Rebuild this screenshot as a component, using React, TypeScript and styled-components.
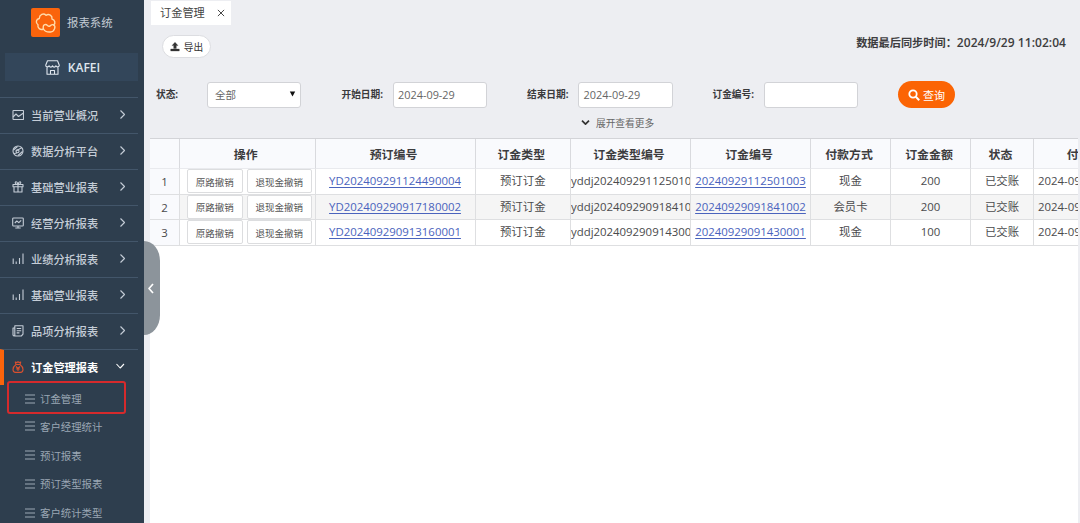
import React from 'react';
import styled, { createGlobalStyle, css } from 'styled-components';

const GlobalStyle = createGlobalStyle`
  * { box-sizing: border-box; }
  html, body { margin: 0; padding: 0; overflow: hidden; }
  body { font-family: "Open Sans", "Noto Sans CJK SC", sans-serif; color: #444; background: #edeef2; }
`;

const Page = styled.div`
  display: flex;
  position: relative;
  width: 1080px;
  height: 523px;
  overflow: hidden;
  background: #edeef2;
`;

const Sidebar = styled.aside`
  width: 144px;
  flex: none;
  height: 523px;
  overflow: hidden;
  background: #2e3e4e;
  display: flex;
  flex-direction: column;
`;

const Brand = styled.div`
  display: flex;
  align-items: center;
  height: 30px;
  margin: 8px 0 0 31px;
  gap: 7px;
  font-size: 11.4px;
  line-height: 16px;
  color: #c3cbd4;
  white-space: nowrap;
`;

const Logo = styled.svg`
  width: 29px;
  height: 29px;
  border-radius: 2px;
  background: #fa640c;
  fill: none;
  stroke: #ffd9a8;
  stroke-width: 1.4;
  stroke-linecap: round;
  stroke-linejoin: round;
`;

const Shop = styled.div`
  display: flex;
  flex: none;
  align-items: center;
  justify-content: center;
  gap: 8px;
  width: 133px;
  height: 28px;
  margin: 16px 0 15px 5px;
  padding-left: 2px;
  background: #33465a;
  color: #dfe6ee;
  font-size: 12px;
  font-weight: 600;
`;

const Icon = styled.svg<{ $size?: number }>`
  width: ${p => p.$size ?? 12}px;
  height: ${p => p.$size ?? 12}px;
  flex: none;
  fill: none;
  stroke: currentColor;
  stroke-width: 1.1;
  stroke-linejoin: round;
`;

const MenuRow = styled.div<{ $active?: boolean }>`
  display: flex;
  align-items: center;
  width: 138px;
  height: 36px;
  flex: none;
  padding: 0 ${p => (p.$active ? 13 : 11)}px 0 ${p => (p.$active ? 8 : 12)}px;
  border-top: 1px solid #43566a;
  color: #c5cdd7;
  & > svg { margin-bottom: 2px; }
  ${p => p.$active && css`
    border-left: 4px solid #fa640c;
    color: #fff;
    & > svg:first-child { color: #d9502f; }
  `}
`;

const Menu = styled.nav`
  padding-top: 1px;
`;

const MenuLabel = styled.span<{ $active?: boolean }>`
  margin-left: 7px;
  flex: 1;
  white-space: nowrap;
  font-size: 11.2px;
  line-height: 16px;
  font-weight: ${p => (p.$active ? 600 : 500)};
`;

const SubList = styled.div`
  padding-left: 7px;
`;

const SubItem = styled.div<{ $marked?: boolean }>`
  display: flex;
  align-items: center;
  gap: 5px;
  width: 119px;
  height: 28.8px;
  padding-left: 18px;
  color: #9ba7b4;
  font-size: 10.4px;
  white-space: nowrap;
  ${p => p.$marked && css`
    height: 33px;
    padding-left: 16px;
    margin-top: -4px;
    margin-bottom: -2px;
    padding-top: 2px;
    border: 2px solid #d62a2c;
    border-radius: 3px;
  `}
`;

const Main = styled.main`
  flex: 1;
  min-width: 0;
  display: flex;
  flex-direction: column;
  padding: 0 2px 0 6px;
`;

const Tab = styled.div`
  display: flex;
  align-items: center;
  justify-content: space-between;
  width: 80px;
  height: 24px;
  margin: 1px 0 0 1px;
  padding: 0 6px 0 9px;
  background: #fff;
  font-size: 11.2px;
  line-height: 16px;
`;

const TopBar = styled.div`
  display: flex;
  justify-content: space-between;
  height: 56px;
  padding: 10px 12px 0 12px;
`;

const Export = styled.button`
  display: flex;
  align-items: center;
  justify-content: center;
  gap: 4px;
  width: 49px;
  height: 23px;
  padding: 0;
  border: 1px solid #dcdde1;
  border-radius: 12px;
  background: #fff;
  color: #333;
  font: 9.7px "Open Sans", "Noto Sans CJK SC", sans-serif;
`;

const SyncTime = styled.div`
  display: flex;
  align-items: center;
  height: 14px;
  font-size: 11.2px;
  line-height: 15px;
  font-weight: 600;
  color: #3d3d40;
  white-space: pre;
`;

const Stamp = styled.span`
  font-size: 12px;
  letter-spacing: 0.05px;
`;

const Filters = styled.div`
  display: grid;
  grid-template-columns: 51px 134.5px 51px 134.5px 51px 134.5px 51px 134.5px 57px;
  align-items: center;
  height: 27px;
  padding-left: 6px;
`;

const FieldLabel = styled.label`
  padding-bottom: 1px;
  font-size: 9.7px;
  font-weight: 700;
  color: #3a3a3d;
  white-space: nowrap;
`;

const Field = styled.div<{ $select?: boolean }>`
  display: flex;
  align-items: center;
  justify-content: space-between;
  width: ${p => (p.$select ? 93.5 : 94.5)}px;
  height: 26px;
  padding: ${p => (p.$select ? '0 4px 0 7px' : '0 5px 0 4.5px')};
  border: 1px solid #d2d3d7;
  border-radius: 3px;
  background: #fff;
  color: #666;
  font-size: ${p => (p.$select ? 10.5 : 10.9)}px;
`;

const Search = styled.button`
  display: flex;
  align-items: center;
  justify-content: center;
  gap: 3px;
  width: 57px;
  height: 27px;
  padding: 0;
  border: 0;
  border-radius: 14px;
  background: #fb6404;
  color: #fff;
  font: 11px "Open Sans", "Noto Sans CJK SC", sans-serif;
`;

const More = styled.div`
  display: flex;
  align-items: center;
  gap: 6px;
  height: 30px;
  padding: 0 0 1px 431px;
  color: #666;
  font-size: 9.7px;
`;

const TableWrap = styled.div`
  flex: 1;
  overflow: hidden;
  background: #fff;
`;

const Table = styled.table`
  table-layout: fixed;
  width: 1001px;
  border-collapse: separate;
  border-spacing: 0;
  border-top: 1px solid #d3d4d8;
`;

const Th = styled.th`
  height: 30px;
  padding: 0 3px 0 0;
  border-right: 1px solid #d9dade;
  border-bottom: 1px solid #e9eaee;
  background: #f9fafd;
  font-size: 11.9px;
  line-height: 16px;
  font-weight: 700;
  color: #3c3c3e;
  white-space: nowrap;
`;

const Td = styled.td`
  height: 25.6px;
  padding: 0;
  overflow: hidden;
  border-right: 1px solid #dedfe1;
  border-bottom: 1px solid #dedfe1;
  font-size: 11.4px;
  line-height: 16px;
  text-align: center;
  white-space: nowrap;
  color: #4a4a4c;
`;

const Tr = styled.tr<{ $shade?: boolean }>`
  background: ${p => (p.$shade ? '#f5f5f5' : '#fff')};
  & > td:first-child { background: #f9fafd; padding-top: 2px; }
`;

const ClippedTd = styled(Td)`
  text-align: left;
`;

const DateTd = styled(Td)`
  text-align: left;
  padding-left: 4px;
`;

const Link = styled.a`
  color: #4a63bd;
  text-decoration: underline;
  text-underline-offset: 1.5px;
`;

const Actions = styled.div`
  display: flex;
  justify-content: center;
  gap: 4px;
  padding-left: 4px;
`;

const Small = styled.button<{ $w: number }>`
  width: ${p => p.$w}px;
  height: 24px;
  padding: 1px 0 0;
  border: 1px solid #dcdddf;
  border-radius: 2px;
  background: #fff;
  color: #555;
  font: 9.5px "Open Sans", "Noto Sans CJK SC", sans-serif;
  white-space: nowrap;
`;

const Collapse = styled.div`
  position: absolute;
  left: 144px;
  top: 241px;
  width: 16px;
  height: 94px;
  display: flex;
  align-items: center;
  justify-content: center;
  padding-right: 1px;
  border-radius: 0 16px 16px 0 / 0 20px 20px 0;
  background: #8c949b;
  color: #fff;
`;

const icons: Record<string, React.ReactNode> = {
  picture: <><rect x="1" y="1.5" width="10.5" height="9" rx=".5" /><path d="M1 8l3-3 2.5 2.5L11.5 4" /></>,
  gauge: <><circle cx="6" cy="6" r="5" /><path d="M1.5 5l4-3.5M4 6l6-3.5M6 10.5l4.5-4M2 8.5l3-.5" /><circle cx="5.5" cy="6.3" r="1.5" /></>,
  gift: <path d="M1 3.5h10v2.3H1zM2 5.8V11h8V5.8M6 3.5V11M6 3.5C3 3.5 2.7 1 4 .8S6 3.5 6 3.5 6.7.9 8 .8s1 2.7-2 2.7" />,
  board: <><rect x=".7" y="1" width="10.6" height="8" rx=".8" /><path d="M2.8 6l2-2 2 1.7L9.2 3.3M6 9v2M3.3 11h5.4" /></>,
  bars: <path d="M1.2 5.5V11M4.2 8.5V11M7.5 5V11M11 .5V11" />,
  doc: <path d="M2.8.8H11v8.4L9.3 11H2.8zM2.8 3H1v7c0 .7.5 1 1.8 1M4.7 3.5h4.5M4.7 5.7h4.5M4.7 7.9h2.7" />,
  bag: <><path d="M4 3.5L3.3 1l1.7.6L6 .6l1 1 1.7-.6L8 3.5M4 3.5h4c2 1.5 3 3.2 3 5 0 2-1 2.900-2.500 2.900h-5C2 11.400 1 10.500 1 8.500c0-1.800 1-3.500 3-5z" /><path d="M4 5.5l2 2 2-2M6 7.5V10M4.2 8h3.6" /></>,
};

const menu = [
  ['picture', '当前营业概况'],
  ['gauge', '数据分析平台'],
  ['gift', '基础营业报表'],
  ['board', '经营分析报表'],
  ['bars', '业绩分析报表'],
  ['bars', '基础营业报表'],
  ['doc', '品项分析报表'],
  ['bag', '订金管理报表'],
];

const subItems = ['订金管理', '客户经理统计', '预订报表', '预订类型报表', '客户统计类型'];

const columns = [
  ['', 30], ['操作', 135.5], ['预订编号', 160], ['订金类型', 95.5], ['订金类型编号', 120],
  ['订金编号', 120], ['付款方式', 80], ['订金金额', 80], ['状态', 63], ['付款时间', 117],
] as const;

const rows = [
  ['YD202409291124490004', 'yddj20240929112501003', '20240929112501003', '现金', '200'],
  ['YD202409290917180002', 'yddj20240929091841002', '20240929091841002', '会员卡', '200'],
  ['YD202409290913160001', 'yddj20240929091430001', '20240929091430001', '现金', '100'],
];

export default function App() {
  return (
    <Page>
      <GlobalStyle />
      <Sidebar>
        <Brand>
          <Logo viewBox="0 0 29 29">
            <path d="M12.5 21c-3.2 1.5-6.3-1-5.5-4.2C4.3 14.8 5 11 8.3 10.5 8.5 6.5 12.5 4.8 15 7.3c3-1.8 6.5.2 6 3.7 3 .8 3.8 4.2 1.7 6" />
            <path d="M12.5 21c-.8-2.5 0-4.5 2-4.5 1.800 0 2 1.500 3.500 1.800 1.300.2 2-2.300 4.500-1.500 2.500 1 1.500 6.700-3 7.200-3.500.3-6-1-7-3z" />
          </Logo>
          报表系统
        </Brand>
        <Shop>
          <Icon $size={15} viewBox="0 0 15 15">
            <path d="M2.5.8h10l1.8 4.4c0 2-2.7 2.3-3.4.6-.7 1.7-2.8 1.7-3.4 0-.6 1.7-2.7 1.7-3.4 0-.7 1.7-3.4 1.4-3.4-.6zM2 7.5v6.7h11V7.5M5.5 14v-3.5h4V14" />
          </Icon>
          KAFEI
        </Shop>
        <Menu>
          {menu.map(([icon, label], i) => {
            const active = i === menu.length - 1;
            return (
              <MenuRow key={i} $active={active}>
                <Icon viewBox="0 0 12 12">{icons[icon]}</Icon>
                <MenuLabel $active={active}>{label}</MenuLabel>
                <Icon $size={9} viewBox="0 0 9 9">
                  <path d={active ? 'M.5 2l3.7 4L8 2' : 'M2.5.5l4 4-4 4'} />
                </Icon>
              </MenuRow>
            );
          })}
        </Menu>
        <SubList>
          {subItems.map((label, i) => (
            <SubItem key={label} $marked={i === 0}>
              <Icon $size={10} viewBox="0 0 10 10"><path d="M0 1h10M0 5h10M0 9h10" /></Icon>
              {label}
            </SubItem>
          ))}
        </SubList>
      </Sidebar>
      <Main>
        <Tab>
          订金管理
          <Icon $size={8} viewBox="0 0 9 9"><path d="M1 1l7 7M8 1L1 8" /></Icon>
        </Tab>
        <TopBar>
          <Export>
            <Icon $size={10} viewBox="0 0 10 10">
              <path d="M5 .3L8 3.6H6.3V6.5H3.7V3.6H2zM.7 7h8.6v2H.7z" fill="currentColor" strokeWidth=".3" />
            </Icon>
            导出
          </Export>
          <SyncTime>数据最后同步时间：<Stamp>2024/9/29 11:02:04</Stamp></SyncTime>
        </TopBar>
        <Filters>
          <FieldLabel>状态:</FieldLabel>
          <Field $select>
            全部
            <Icon $size={7} viewBox="0 0 7 7"><path d="M.8.5h5.4L3.5 5.5z" fill="#111" stroke="none" /></Icon>
          </Field>
          <FieldLabel>开始日期:</FieldLabel>
          <Field>2024-09-29</Field>
          <FieldLabel>结束日期:</FieldLabel>
          <Field>2024-09-29</Field>
          <FieldLabel>订金编号:</FieldLabel>
          <Field />
          <Search>
            <Icon $size={12} viewBox="0 0 12 12"><circle cx="5" cy="5" r="3.7" strokeWidth="1.8" /><path d="M7.8 7.8l3.4 3.4" strokeWidth="2" /></Icon>
            查询
          </Search>
        </Filters>
        <More>
          <Icon $size={9} viewBox="0 0 9 9"><path d="M1 2.7l3.5 3.5L8 2.7" strokeWidth="1.7" stroke="#333" /></Icon>
          展开查看更多
        </More>
        <TableWrap>
          <Table>
            <colgroup>{columns.map(([name, w]) => <col key={name} width={w} />)}</colgroup>
            <thead><tr>{columns.map(([name]) => <Th key={name}>{name}</Th>)}</tr></thead>
            <tbody>
              {rows.map((r, i) => (
                <Tr key={r[0]} $shade={i === 1}>
                  <Td>{i + 1}</Td>
                  <Td><Actions><Small $w={56}>原路撤销</Small><Small $w={65}>退现金撤销</Small></Actions></Td>
                  <Td><Link>{r[0]}</Link></Td>
                  <Td>预订订金</Td>
                  <ClippedTd>{r[1]}</ClippedTd>
                  <Td><Link>{r[2]}</Link></Td>
                  <Td>{r[3]}</Td>
                  <Td>{r[4]}</Td>
                  <Td>已交账</Td>
                  <DateTd>2024-09-29</DateTd>
                </Tr>
              ))}
            </tbody>
          </Table>
        </TableWrap>
      </Main>
      <Collapse>
        <Icon $size={11} viewBox="0 0 11 11"><path d="M7 1L3 5.5 7 10" strokeWidth="1.7" /></Icon>
      </Collapse>
    </Page>
  );
}
